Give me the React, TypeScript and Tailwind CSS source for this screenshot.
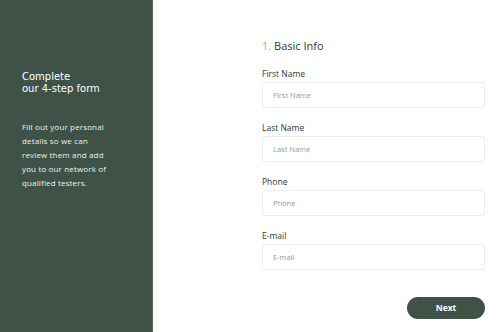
import React from "react";

/* ---------- fields ---------- */
const fields = ["First Name", "Last Name", "Phone", "E-mail"];

export default function App() {
  return (
    <div
      className="flex h-[332px] w-[500px] overflow-hidden bg-white"
      style={{ fontFamily: '"Open Sans", "Liberation Sans", sans-serif' }}
    >
      {/* sidebar */}
      <aside className="flex w-[153px] shrink-0 flex-col border-r border-[#56695f] bg-[#3e5248] pl-[22px] pr-2 pt-[71px] text-white">
        <h1
          className="flex flex-col text-[10px] leading-[12px] font-normal"
          style={{ fontFamily: '"DejaVu Sans", sans-serif' }}
        >
          <span>Complete</span>
          <span>our 4-step form</span>
        </h1>
        <p className="mt-[25px] text-[8px] leading-[14px] tracking-[0.15px] text-[#eef1ee]">
          Fill out your personal
          <br />
          details so we can
          <br />
          review them and add
          <br />
          you to our network of
          <br />
          qualified testers.
        </p>
      </aside>

      {/* form */}
      <main className="flex flex-1 flex-col pl-[109px] pr-[15px] pt-[38px]">
        <h2 className="text-[11px] leading-[16px] text-[#2f3b35]">
          <span className="text-[#c29b5c]">1.</span> Basic Info
        </h2>

        <div className="mt-[15px] flex flex-col gap-[15px]">
          {fields.map((f) => (
            <label key={f} className="flex flex-col gap-[3px]">
              <span className="text-[8.5px] leading-[10px] text-[#2f3b35]">{f}</span>
              <input
                placeholder={f}
                className="h-[26px] w-full rounded-[3px] border border-[#ececec] px-[10px] text-[7.5px] text-[#333] placeholder:text-[#9a9a9a] outline-none"
              />
            </label>
          ))}
        </div>

        <div className="mt-auto mb-[13px] flex justify-end">
          <button
            type="button"
            className="h-[22px] w-[78px] rounded-full bg-[#3e5248] text-[8.5px] font-bold text-white"
          >
            Next
          </button>
        </div>
      </main>
    </div>
  );
}
